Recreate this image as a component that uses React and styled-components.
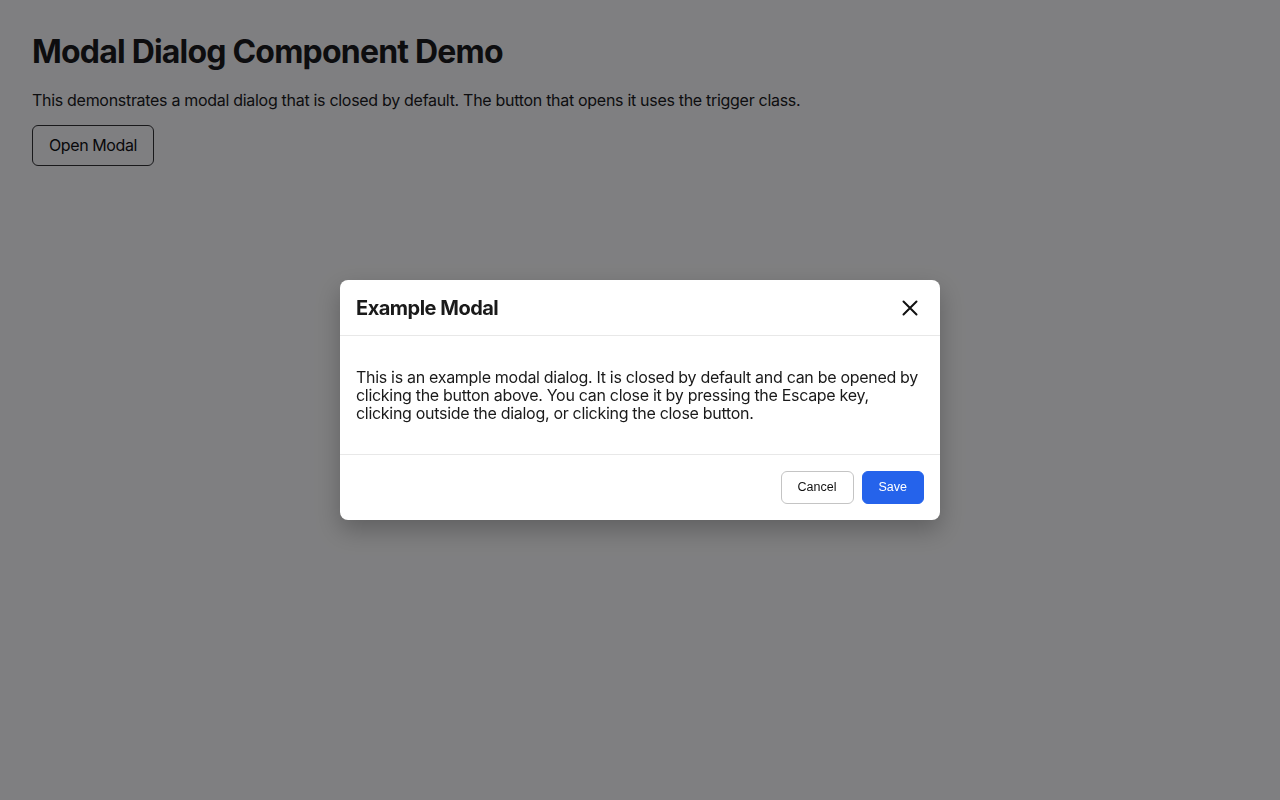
import React from 'react';
import styled, { createGlobalStyle } from 'styled-components';

const GlobalStyle = createGlobalStyle`
    html, body {
        margin: 0;
        padding: 0;
        background: #ffffff;
    }
    body {
        font-family: Inter, "Noto Sans", "Liberation Sans", sans-serif;
        color: #1a1a1a;
    }
`;

const Page = styled.main`
    padding: 33px 32px 32px;
`;

const Title = styled.h1`
    font-size: 32px;
    font-weight: 700;
    line-height: 1.2;
    margin: 0 0 20px;
    letter-spacing: -0.8px;
`;

const Intro = styled.p`
    font-size: 16px;
    line-height: 19px;
    margin: 0 0 15px;
    letter-spacing: -0.3px;
`;

const TriggerButton = styled.button`
    font-family: inherit;
    font-size: 16px;
    line-height: 19px;
    letter-spacing: -0.4px;
    padding: 10px 16px;
    color: #111;
    background: #fff;
    border: 1px solid #333;
    border-radius: 6px;
    cursor: pointer;
`;

const Overlay = styled.div`
    position: fixed;
    inset: 0;
    background: rgba(0, 0, 3, 0.5);
    display: flex;
    align-items: center;
    justify-content: center;
`;

const Dialog = styled.div`
    width: 600px;
    background: #fff;
    border-radius: 8px;
    box-shadow: 0 10px 25px rgba(0, 0, 0, 0.25);
    overflow: hidden;
`;

const Header = styled.header`
    display: flex;
    align-items: center;
    justify-content: space-between;
    padding: 16px 16px 15px;
    border-bottom: 1px solid #e8e8e8;
`;

const DialogTitle = styled.h2`
    margin: 0;
    font-size: 20px;
    font-weight: 700;
    line-height: 24px;
    letter-spacing: -0.5px;
    color: #1a1a1a;
`;

const CloseButton = styled.button`
    display: flex;
    align-items: center;
    justify-content: center;
    width: 28px;
    height: 24px;
    padding: 0;
    border: 0;
    background: transparent;
    cursor: pointer;
    color: #111;
`;

const Body = styled.div`
    padding: 16px;
    p {
        margin: 16px 0;
        font-size: 16px;
        line-height: 18px;
        letter-spacing: -0.3px;
        color: #1a1a1a;
    }
`;

const Footer = styled.footer`
    display: flex;
    justify-content: flex-end;
    gap: 8px;
    padding: 16px;
    border-top: 1px solid #e8e8e8;
`;

const ActionButton = styled.button`
    font-family: "Liberation Sans", Arial, sans-serif;
    font-size: 12.5px;
    font-weight: ${ ({ $primary }) => $primary ? 500 : 400 };
    line-height: 15px;
    padding: 8px 16px;
    border-radius: 6px;
    cursor: pointer;
    border: 1px solid ${ ({ $primary }) => $primary ? '#2563eb' : '#c4c4c4' };
    background: ${ ({ $primary }) => $primary ? '#2563eb' : '#fff' };
    color: ${ ({ $primary }) => $primary ? '#fff' : '#111' };
`;

const CloseIcon = () => (
    <svg width="24" height="24" viewBox="0 0 24 24" fill="none" stroke="currentColor" strokeWidth="2" strokeLinecap="round">
        <path d="M18.5 5.5 5.5 18.5M5.5 5.5l13 13" />
    </svg>
);

export default function App() {
    return (
        <>
            <GlobalStyle />
            <Page>
                <Title>Modal Dialog Component Demo</Title>
                <Intro>This demonstrates a modal dialog that is closed by default. The button that opens it uses the trigger class.</Intro>
                <TriggerButton className="trigger">Open Modal</TriggerButton>
            </Page>
            <Overlay>
                <Dialog role="dialog" aria-modal="true">
                    <Header>
                        <DialogTitle>Example Modal</DialogTitle>
                        <CloseButton aria-label="Close"><CloseIcon /></CloseButton>
                    </Header>
                    <Body>
                        <p>This is an example modal dialog. It is closed by default and can be opened by clicking the button above. You can close it by pressing the Escape key, clicking outside the dialog, or clicking the close button.</p>
                    </Body>
                    <Footer>
                        <ActionButton>Cancel</ActionButton>
                        <ActionButton $primary>Save</ActionButton>
                    </Footer>
                </Dialog>
            </Overlay>
        </>
    );
}
